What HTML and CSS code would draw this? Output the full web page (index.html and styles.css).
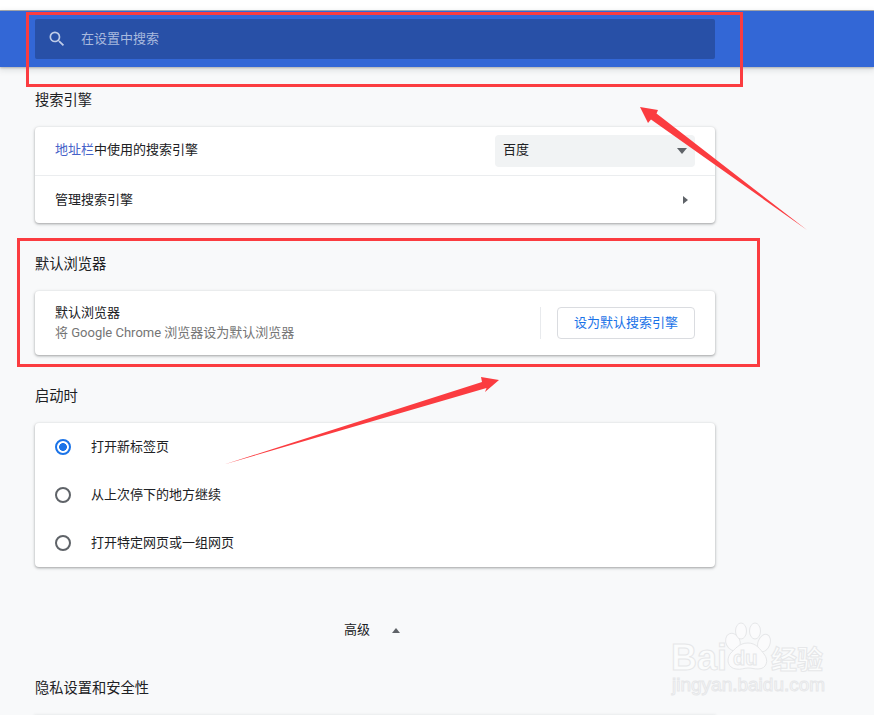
FILE: index.html
```html
<!DOCTYPE html>
<html lang="zh-CN">
<head>
<meta charset="utf-8">
<title>设置</title>
<link rel="stylesheet" href="styles.css">
</head>
<body>
<div class="topstrip"></div>
<header class="toolbar">
  <div class="search">
    <svg class="search-icon" viewBox="0 0 24 24" width="20" height="20"><path fill="currentColor" d="M15.5 14h-.79l-.28-.27A6.47 6.47 0 0 0 16 9.5 6.5 6.5 0 1 0 9.5 16c1.61 0 3.09-.59 4.23-1.57l.27.28v.79l5 4.99L20.49 19l-4.99-5zm-6 0C7.01 14 5 11.99 5 9.5S7.01 5 9.5 5 14 7.01 14 9.5 11.99 14 9.5 14z"/></svg>
    <span class="search-text">在设置中搜索</span>
  </div>
</header>
<main class="main">
  <h2 class="title title-first">搜索引擎</h2>
  <section class="card">
    <div class="row row-split">
      <span class="nudge"><span class="link">地址栏</span>中使用的搜索引擎</span>
      <div class="select"><span class="nudge">百度</span><i class="tri tri-down"></i></div>
    </div>
    <div class="row row-next">
      <span>管理搜索引擎</span>
      <i class="tri tri-right"></i>
    </div>
  </section>

  <h2 class="title">默认浏览器</h2>
  <section class="card">
    <div class="row-default">
      <div class="stack">
        <span>默认浏览器</span>
        <span class="secondary">将 Google Chrome 浏览器设为默认浏览器</span>
      </div>
      <div class="vsep"></div>
      <button class="btn">设为默认搜索引擎</button>
    </div>
  </section>

  <h2 class="title">启动时</h2>
  <section class="card">
    <div class="radio-row"><i class="radio radio-on"></i><span>打开新标签页</span></div>
    <div class="radio-row"><i class="radio"></i><span>从上次停下的地方继续</span></div>
    <div class="radio-row"><i class="radio"></i><span>打开特定网页或一组网页</span></div>
  </section>

  <div class="advanced"><span>高级</span><i class="tri tri-up"></i></div>

  <h2 class="title title-last">隐私设置和安全性</h2>
  <section class="card card-cut"></section>
</main>

<svg class="overlay" width="874" height="715" viewBox="0 0 874 715">
  <g class="marks">
    <rect x="27.5" y="13.5" width="714" height="72"/>
    <rect x="18.5" y="239.5" width="740" height="126"/>
    <polygon points="640,107 658,110 656.500,113.500 807,230 651,119.500 648,123"/>
    <polygon points="224,464.500 482,382 481,377 499,380 485,392 486.500,388"/>
  </g>
  <g class="wm">
    <ellipse cx="733" cy="642" rx="7" ry="9" transform="rotate(-25 733 642)"/>
    <ellipse cx="741" cy="631" rx="5.500" ry="8"/>
    <ellipse cx="755" cy="631" rx="5.500" ry="8"/>
    <ellipse cx="764" cy="643" rx="6" ry="9" transform="rotate(20 764 643)"/>
    <path d="M748 643c8 0 12 6 16 11 5 6 3 15-6 15-4 0-6-1-10-1s-7 2-12 1c-8-1-10-9-6-15 5-5 9-11 18-11z"/>
    <text class="wm-bai" x="671" y="670">Bai</text>
    <text class="wm-du" x="733" y="665">du</text>
    <text class="wm-cn" x="771" y="669">经验</text>
    <text class="wm-url" x="672" y="691">jingyan.baidu.com</text>
  </g>
</svg>
</body>
</html>
```
FILE: styles.css
```css
* { box-sizing: border-box; }
html, body { margin: 0; height: 715px; overflow: hidden; }
body {
  position: relative;
  background: #f8f9fa;
  color: #202124;
  font: 13px/20px Roboto, "Noto Sans CJK SC", sans-serif;
}
.topstrip { height: 11px; background: #fff; border-bottom: 1px solid #a9abb0; }
.toolbar {
  height: 56px;
  padding: 8px 0 0 35px;
  background: #3367d6;
  box-shadow: 0 1px 2px rgba(60,64,67,.3), 0 2px 6px 1px rgba(60,64,67,.15);
}
.search {
  display: flex;
  align-items: center;
  width: 680px;
  height: 40px;
  padding-left: 12px;
  background: #2850a7;
  border-radius: 2px;
}
.search-icon { color: #bfcce8; flex: none; }
.search-text { margin-left: 14px; color: #a9bade; }
.main { width: 715px; padding-left: 35px; }
.title { margin: 31px 0 17px; font-size: 14.25px; font-weight: 400; line-height: 20px; }
.title-first { margin-top: 23px; }
.title-last { margin-top: 24px; }
.card {
  width: 680px;
  background: #fff;
  border-radius: 4px;
  box-shadow: 0 1px 2px rgba(60,64,67,.3), 0 1px 3px 1px rgba(60,64,67,.15);
}
.card-cut { height: 0; }
.row { display: flex; align-items: center; justify-content: space-between; padding: 0 20px; }
.row-split { height: 49px; border-bottom: 1px solid #ebedef; }
.row-next { height: 47px; padding-right: 27px; }
.nudge { margin-bottom: 2px; }
.link { color: #4562c8; }
.select {
  display: flex;
  align-items: center;
  justify-content: space-between;
  width: 200px;
  height: 32px;
  padding: 0 8px;
  background: #f1f3f4;
  border-radius: 4px;
}
.tri { display: block; width: 0; height: 0; border-style: solid; border-color: transparent; }
.tri-down { border-width: 6px 5px 0; border-top-color: #5f6368; }
.tri-right { border-width: 4px 0 4px 5px; border-left-color: #5f6368; }
.tri-up { border-width: 0 4.5px 5px; border-bottom-color: #5f6368; }
.row-default { display: flex; align-items: center; height: 64px; padding: 0 20px; }
.stack { display: flex; flex-direction: column; flex: 1; }
.secondary { color: #757575; }
.vsep { width: 1px; height: 32px; margin-right: 16px; background: #e8eaed; }
.btn {
  width: 138px;
  height: 32px;
  padding: 0;
  font: inherit;
  color: #1a73e8;
  background: #fff;
  border: 1px solid #dadce0;
  border-radius: 4px;
}
.radio-row { display: flex; align-items: center; height: 48px; padding-left: 20px; }
.radio {
  flex: none;
  width: 16px;
  height: 16px;
  margin-right: 20px;
  border: 2px solid #5f6368;
  border-radius: 50%;
}
.radio-on {
  border-color: #1a73e8;
  background: radial-gradient(circle, #1a73e8 0 3.6px, #fff 4.2px);
}
.advanced {
  display: flex;
  align-items: center;
  gap: 22px;
  height: 48px;
  margin-top: 39px;
  padding-left: 309px;
}
.overlay { position: absolute; left: 0; top: 0; pointer-events: none; }
.marks rect { fill: none; stroke: #fb3c40; stroke-width: 3; }
.marks polygon { fill: #fb3c40; }
.wm ellipse, .wm path { fill: #fbfbfc; stroke: #e6e7e9; stroke-width: 1; }
.wm text { fill: #fbfcfc; stroke: #e6e7e9; stroke-width: 1; font-family: "Liberation Sans", "Noto Sans CJK SC", sans-serif; }
.wm-bai { font-size: 36px; font-weight: 700; }
.wm-du { font-size: 20px; font-weight: 700; }
.wm-cn { font-size: 26px; font-weight: 700; }
.wm-url { font-size: 19px; stroke-width: .7; }
```
